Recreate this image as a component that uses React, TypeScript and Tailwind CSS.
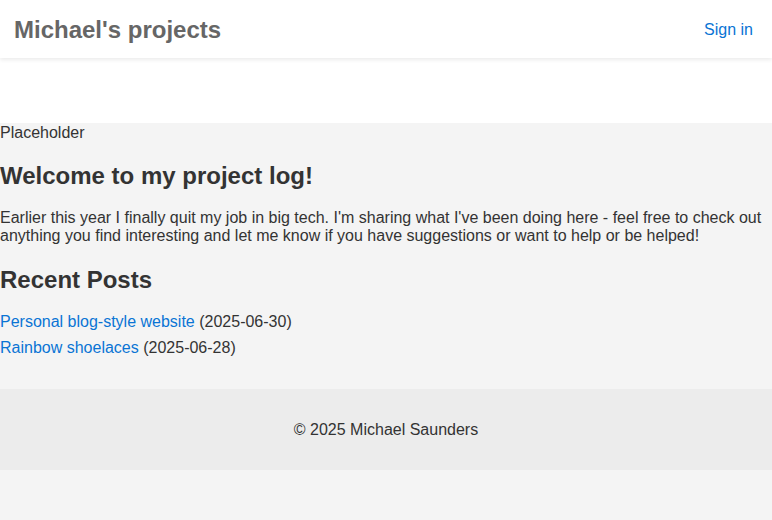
// App.tsx
const posts = [
  { title: "Personal blog-style website", date: "2025-06-30" },
  { title: "Rainbow shoelaces", date: "2025-06-28" },
];

const App: React.FC = () => {
  return (
    <div className="min-h-screen bg-[#f4f4f4] text-[#333] font-['Liberation_Sans',Arial,sans-serif] text-[16px] leading-[18px]">
      <header className="bg-white h-[58px] flex items-center justify-between pl-[14px] pr-[19px] pt-[2px] shadow-[0_2px_4px_rgba(0,0,0,0.08)] relative">
        <h1 className="text-[24px] font-bold text-[#666] leading-[28px]">Michael's projects</h1>
        <a href="#" className="text-[#0a74d4]">Sign in</a>
      </header>
      <div className="bg-white h-[65px]"></div>
      <main className="pb-[32px]">
        <div className="pt-[1px]">Placeholder</div>
        <h2 className="text-[24px] font-bold leading-[28px] mt-[20px] mb-[19px]">Welcome to my project log!</h2>
        <p>
          Earlier this year I finally quit my job in big tech. I'm sharing what I've been doing here - feel free to check out anything you find interesting and let me know if you have suggestions or want to help or be helped!
        </p>
        <h2 className="text-[24px] font-bold leading-[28px] mt-[21px] mb-[19px]">Recent Posts</h2>
        <ul className="flex flex-col gap-[8px]">
          {posts.map((p) => (
            <li key={p.title}>
              <a href="#" className="text-[#0a74d4]">{p.title}</a> ({p.date})
            </li>
          ))}
        </ul>
      </main>
      <footer className="bg-[#ececec] h-[81px] flex items-center justify-center">
        <span>© 2025 Michael Saunders</span>
      </footer>
    </div>
  );
};

export default App;
